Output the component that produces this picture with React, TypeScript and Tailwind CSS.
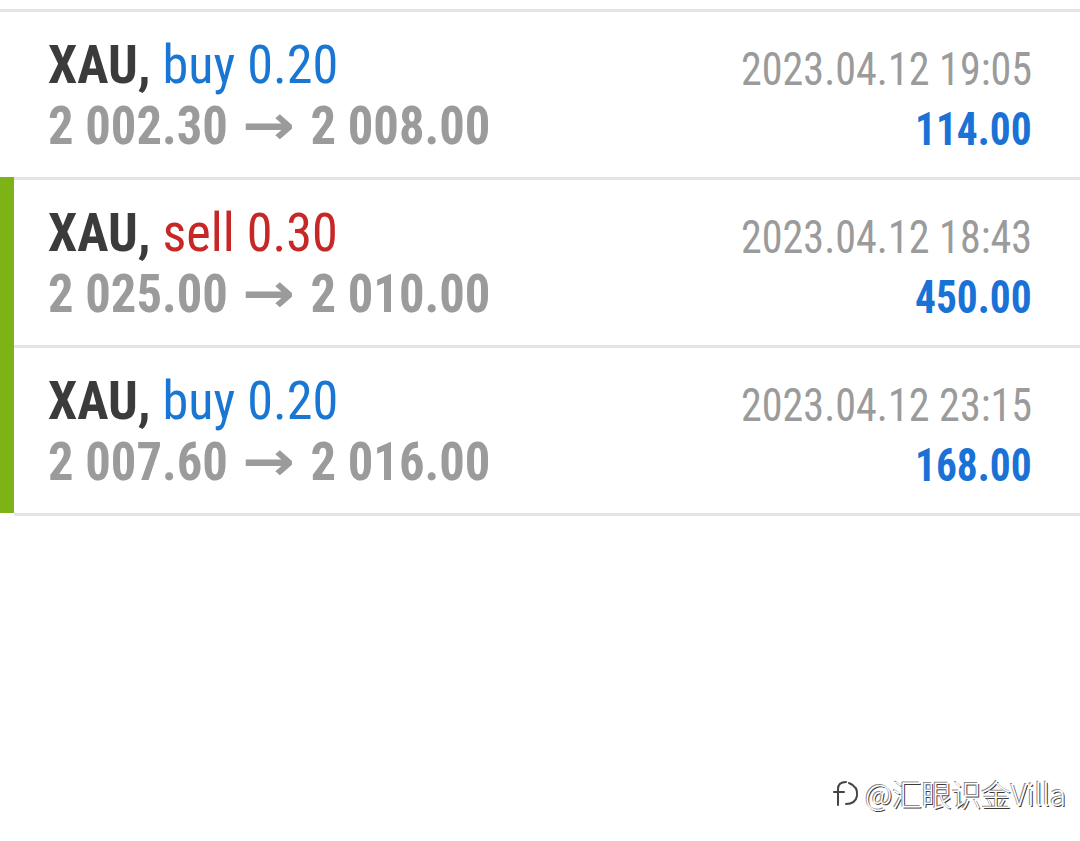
type Row = {
  side: "buy" | "sell";
  lots: string;
  from: string;
  to: string;
  time: string;
  profit: string;
  marked: boolean;
};

const rows: Row[] = [
  { side: "buy", lots: "0.20", from: "2 002.30", to: "2 008.00", time: "2023.04.12 19:05", profit: "114.00", marked: false },
  { side: "sell", lots: "0.30", from: "2 025.00", to: "2 010.00", time: "2023.04.12 18:43", profit: "450.00", marked: true },
  { side: "buy", lots: "0.20", from: "2 007.60", to: "2 016.00", time: "2023.04.12 23:15", profit: "168.00", marked: true },
];

function TradeRow({ r, first }: { r: Row; first: boolean }) {
  return (
    <div className={`flex h-[168px] ${first ? "border-t-[3px] border-[#e4e4e4]" : ""}`}>
      <div className={`w-[14px] shrink-0 ${r.marked ? "bg-[#7db317]" : "bg-white"}`} />
      <div
        className={`flex flex-1 justify-between pl-[34px] pr-[48px] ${first ? "" : "border-t-[3px] border-[#e4e4e4]"}`}
      >
        <div className="flex flex-col items-start pt-[23px] text-[53px] leading-[60px]">
          <div className="origin-left scale-x-[0.985] whitespace-nowrap">
            <span className="font-bold text-[#3b3b3b]">XAU,</span>{" "}
            <span className={r.side === "buy" ? "text-[#1976d2]" : "text-[#c62828]"}>
              {r.side} {r.lots}
            </span>
          </div>
          <div className="origin-left scale-x-[0.955] whitespace-nowrap font-bold text-[#9b9b9b]">
            {r.from}{" "}
            <span className="ml-[7px] mr-[9px] inline-block scale-x-[1.2] font-['DejaVu_Sans',sans-serif] text-[55px] font-bold">
              →
            </span>{" "}
            {r.to}
          </div>
        </div>
        <div className="flex flex-col items-end pt-[27px] text-[46px] leading-[60px]">
          <div className="origin-right scale-x-[0.915] whitespace-nowrap text-[#9b9b9b]">{r.time}</div>
          <div className="origin-right scale-x-[0.9] whitespace-nowrap font-bold text-[#1a72d6]">{r.profit}</div>
        </div>
      </div>
    </div>
  );
}

export default function App() {
  return (
    <div className="relative h-[841px] w-[1080px] overflow-hidden bg-white font-['Roboto_Condensed',Roboto,sans-serif]">
      <div className="pt-[9px]">
        {rows.map((r, i) => (
          <TradeRow key={i} r={r} first={i === 0} />
        ))}
        <div className="ml-[14px] border-t-[3px] border-[#e4e4e4]" />
      </div>
      <div className="absolute left-[831px] top-[776px] flex items-center gap-[4px] text-white">
        <svg width="30" height="34" viewBox="0 0 30 34" fill="none" stroke="#444" strokeWidth="2" strokeLinecap="round">
          <path d="M15 6c-5 0-8 2-8 7v16" />
          <path d="M3 16h10" />
          <path d="M18 7c5 2 9 6 8 13-1 5-5 8-11 8" />
        </svg>
        <span className="font-['Noto_Sans_CJK_SC','Noto_Sans',sans-serif] text-[30px] font-light leading-[34px] tracking-[-0.3px] [text-shadow:-1px_-1px_0_#8a8a8a,1px_1px_0_#3a3a3a]">
          @汇眼识金Villa
        </span>
      </div>
    </div>
  );
}
